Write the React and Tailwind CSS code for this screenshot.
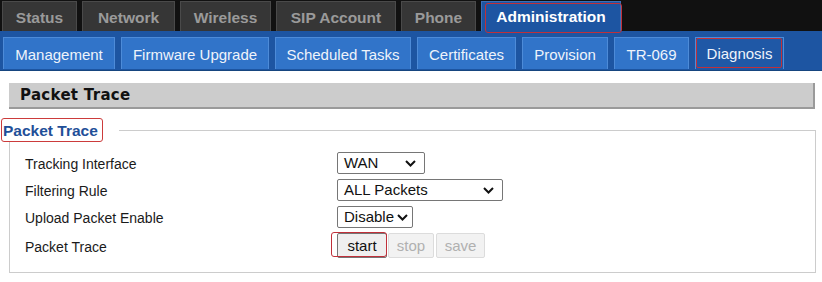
import React from "react";

const topTabs = [
  { label: "Status", w: "w-[75px]" },
  { label: "Network", w: "w-[93px]" },
  { label: "Wireless", w: "w-[91px]" },
  { label: "SIP Account", w: "w-[120px]" },
  { label: "Phone", w: "w-[75px]" },
];

const subTabs = [
  { label: "Management", w: "w-[112px]" },
  { label: "Firmware Upgrade", w: "w-[148px]" },
  { label: "Scheduled Tasks", w: "w-[136px]" },
  { label: "Certificates", w: "w-[99px]" },
  { label: "Provision", w: "w-[86px]" },
  { label: "TR-069", w: "w-[75px]" },
];

function Chevron() {
  return (
    <svg width="11" height="7" viewBox="0 0 11 7" className="shrink-0">
      <path d="M1 1 L5.5 5.5 L10 1" fill="none" stroke="#111" strokeWidth="2" />
    </svg>
  );
}

function Select({ value, w }) {
  return (
    <div
      className={`${w} h-[22px] border border-[#767676] rounded-[2px] bg-white flex items-center justify-between pl-[6px] pr-[8px] text-[15px] leading-[18px] text-[#111]`}
    >
      <span>{value}</span>
      <Chevron />
    </div>
  );
}

export default function App() {
  return (
    <div className="w-[822px] h-[282px] bg-white overflow-hidden font-['Liberation_Sans',Arial,sans-serif]">
      {/* top nav */}
      <div className="h-[31px] bg-[#111111] flex items-end gap-[5px] pl-[2px]">
        {topTabs.map((t) => (
          <div
            key={t.label}
            className={`${t.w} h-[30px] bg-[#363636] border border-b-0 border-[#4a4a4a] flex items-center justify-center pt-[2px] text-[15.5px] font-bold text-[#9a9a9a]`}
          >
            {t.label}
          </div>
        ))}
        <div className="w-[140px] h-[30px] bg-[#1d55a2] border border-b-0 border-[#3a6fb8] relative flex items-center justify-center text-[15.5px] font-bold text-white">
          Administration
          <div className="absolute left-[3px] top-[1px] right-[-2px] bottom-[-2px] border border-[#c0303a] rounded-[3px]" />
        </div>
      </div>

      {/* sub nav */}
      <div className="h-[40px] bg-[#1d55a2] border-b border-[#16457f] flex items-end gap-[6px] pl-[3px] pb-[1px]">
        {subTabs.map((t) => (
          <div
            key={t.label}
            className={`${t.w} h-[32px] bg-[#3174c9] border border-[#4d8bd8] border-b-0 flex items-center justify-center pt-[3px] text-[15px] text-[#eef3fb]`}
          >
            {t.label}
          </div>
        ))}
        <div className="w-[89px] h-[32px] bg-[#1f58a6] border border-[#4d8bd8] border-b-0 relative flex items-center justify-center pt-[1px] text-[15px] text-[#eef3fb]">
          Diagnosis
          <div className="absolute left-[0px] top-[0px] right-[1px] bottom-[1px] border border-[#c0303a] rounded-[2px]" />
        </div>
      </div>

      {/* header */}
      <div className="mt-[12px] ml-[9px] mr-[7px] h-[26px] bg-[#cccccc] border-r-2 border-b-2 border-[#9a9a9a] flex items-center pl-[11px] pt-[1px] font-['DejaVu_Sans',Verdana,sans-serif] font-bold text-[15px] text-[#111] tracking-[0.3px]">
        Packet Trace
      </div>

      {/* fieldset */}
      <div className="relative mt-[21px] ml-[9px] mr-[6px] h-[143px] border border-[#cccccc] pt-[21px] pl-[15px]">
        <div className="absolute left-[-9px] top-[-13px] w-[118px] h-[24px] bg-white">
          <div className="w-[102px] h-[24px] border border-[#cc3b3b] rounded-[3px] flex items-center pl-[1px] pt-[1px] text-[15.5px] font-bold text-[#1f4f98]">
            Packet Trace
          </div>
        </div>

        <div className="grid grid-cols-[312px_auto] gap-y-[5px] text-[14px] leading-[18px] text-[#1a1a1a] items-center">
          <div className="pt-[2px]">Tracking Interface</div>
          <Select value="WAN" w="w-[88px]" />
          <div className="pt-[2px]">Filtering Rule</div>
          <Select value="ALL Packets" w="w-[166px]" />
          <div className="pt-[2px]">Upload Packet Enable</div>
          <div className="flex">
            <div className="w-[76px] h-[22px] border border-[#767676] rounded-[2px] bg-white flex items-center pl-[6px] gap-[3px] text-[15px] leading-[18px] text-[#111]">
              <span>Disable</span>
              <Chevron />
            </div>
          </div>
          <div className="pt-[2px]">Packet Trace</div>
          <div className="flex items-center">
            <div className="relative">
              <div className="w-[50px] h-[25px] bg-[#efefef] border border-[#767676] rounded-[2px] flex items-center justify-center pt-[1px] text-[15px] text-[#111]">
                start
              </div>
              <div className="absolute left-[-6px] top-[-1px] right-[0px] bottom-[1px] border border-[#c0303a] rounded-[3px]" />
            </div>
            <div className="ml-[1px] w-[46px] h-[25px] bg-[#f2f2f2] border border-[#dcdcdc] rounded-[2px] flex items-center justify-center pt-[1px] text-[15px] text-[#b0b0b0]">
              stop
            </div>
            <div className="ml-[2px] w-[49px] h-[25px] bg-[#f2f2f2] border border-[#dcdcdc] rounded-[2px] flex items-center justify-center pt-[1px] text-[15px] text-[#b0b0b0]">
              save
            </div>
          </div>
        </div>
      </div>
    </div>
  );
}
